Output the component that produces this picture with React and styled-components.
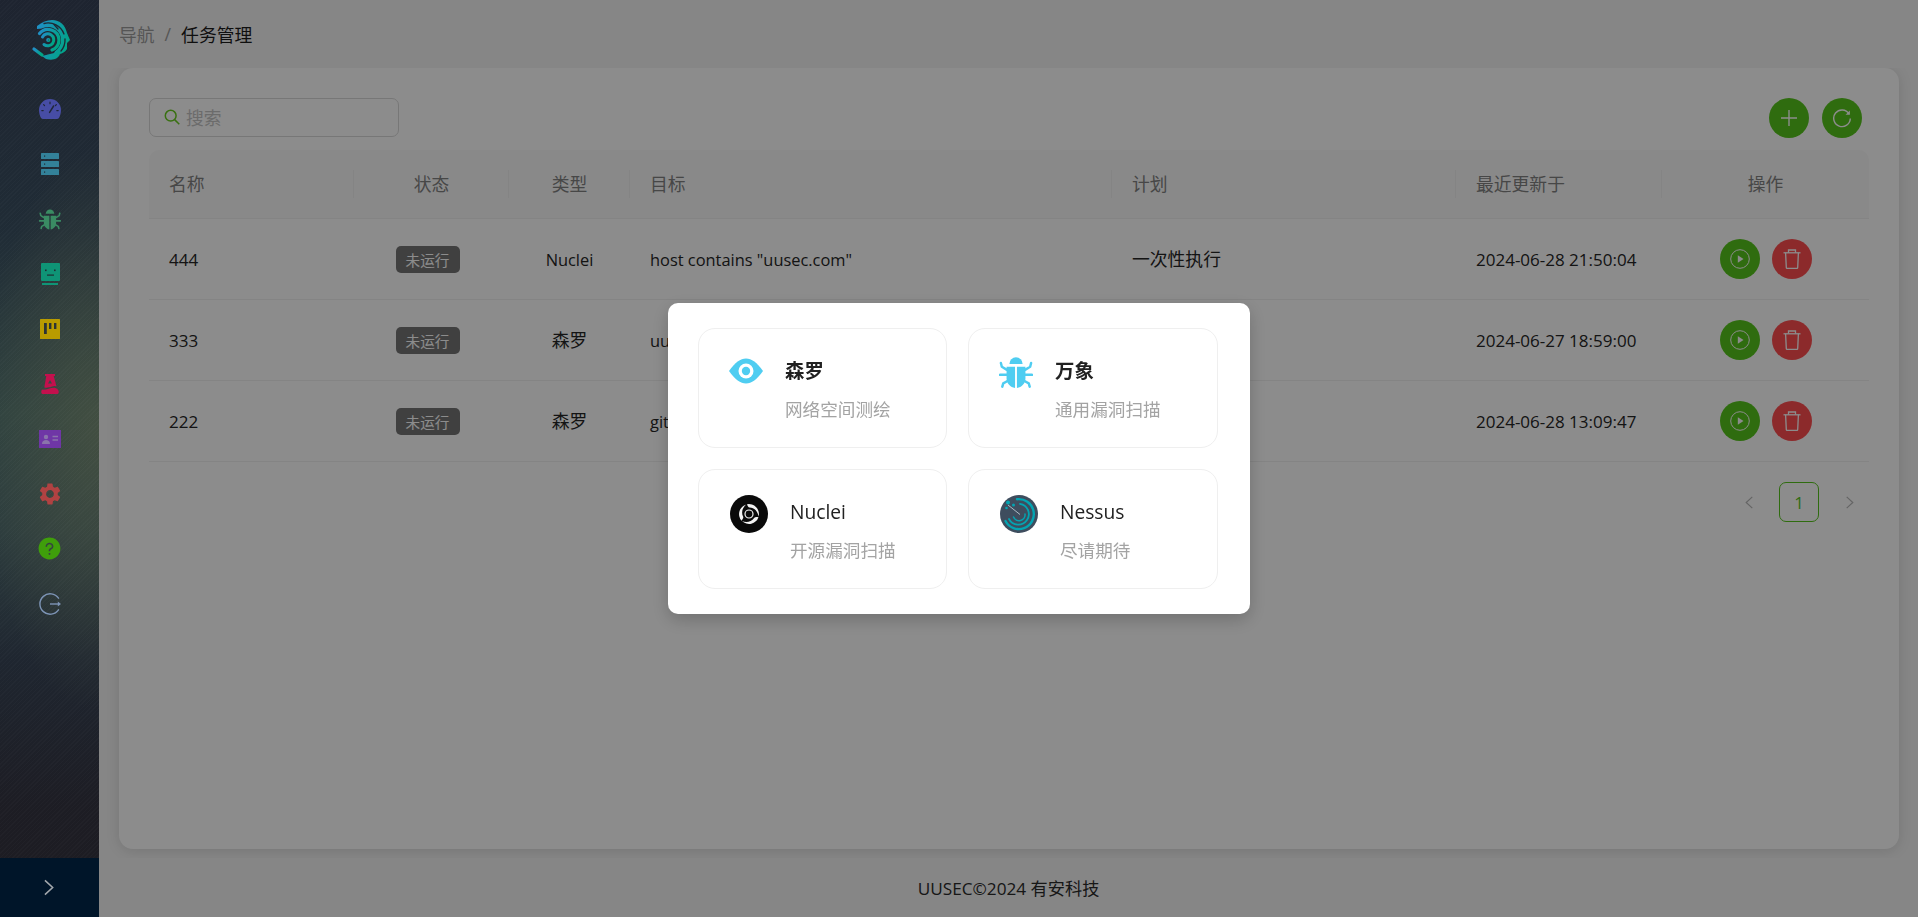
import React from "react";
import styled, { createGlobalStyle } from "styled-components";
import { MdSettings } from "react-icons/md";
import { AiFillQuestionCircle } from "react-icons/ai";

const Global = createGlobalStyle`
  * { box-sizing: border-box; }
  html, body { margin: 0; height: 100%; }
  body {
    font-family: "Open Sans", "Noto Sans CJK SC", sans-serif;
    font-size: 17px;
    color: #222;
    background: #f4f4f4;
    overflow: hidden;
  }
  #root { height: 100%; }
`;

const COLUMNS = "205px 155px 121px 482px 344px 206px 207px";

const Layout = styled.div`
  display: flex;
  height: 917px;
`;

const Sidebar = styled.aside`
  position: relative;
  z-index: 20;
  flex: 0 0 99px;
  display: flex;
  flex-direction: column;
  background:
    repeating-linear-gradient(135deg, rgba(255, 255, 255, 0.018) 0 1px, transparent 1px 3px),
    radial-gradient(ellipse 120px 280px at 100% 47%, rgba(74, 84, 66, 0.7), rgba(74, 84, 66, 0) 100%),
    linear-gradient(180deg, #1e2430 0%, #202c36 25%, #2f4240 45%, #2c3c3e 58%, #1f2630 72%, #1d1d24 88%, #1d1c22 100%);
`;

const LogoBox = styled.div`
  flex: 0 0 81px;
  display: flex;
  justify-content: center;
  padding-top: 20px;
`;

const Menu = styled.nav`
  flex: 1;
  display: flex;
  flex-direction: column;
`;

const MenuItem = styled.div`
  flex: 0 0 55px;
  display: flex;
  align-items: center;
  justify-content: center;
  color: ${(p) => p.$color};
`;

const Trigger = styled.div`
  flex: 0 0 59px;
  display: flex;
  align-items: center;
  justify-content: center;
  padding-right: 2px;
  background: #001529;
  color: #a3a8ad;
`;

const Main = styled.main`
  flex: 1;
  min-width: 0;
  display: flex;
  flex-direction: column;
`;

const Breadcrumb = styled.header`
  flex: 0 0 68px;
  display: flex;
  align-items: center;
  gap: 10px;
  padding-left: 20px;
  padding-bottom: 1px;
`;

const Crumb = styled.span`
  font-size: 17.8px;
  color: ${(p) => (p.$current ? "#1c1c1c" : "#9c9c9c")};
`;

const Content = styled.div`
  flex: 1;
  min-height: 0;
  overflow: hidden;
  padding: 0 19px 9px 20px;
`;

const Card = styled.section`
  height: 100%;
  padding: 30px;
  background: #fff;
  border-radius: 14px;
  box-shadow: 0 2px 14px rgba(0, 0, 0, 0.12);
`;

const Toolbar = styled.div`
  display: flex;
  align-items: flex-start;
  justify-content: space-between;
  height: 40px;
  padding-right: 7px;
  margin-bottom: 12px;
`;

const Search = styled.label`
  display: flex;
  align-items: center;
  gap: 6px;
  width: 250px;
  height: 39px;
  padding: 0 15px 2px 14px;
  border: 1px solid #d9d9d9;
  border-radius: 7px;
  color: #c4c4c4;
  font-size: 17.8px;
`;

const ToolButtons = styled.div`
  display: flex;
  gap: 13px;
`;

const RoundButton = styled.button`
  width: 40px;
  height: 40px;
  padding: 0;
  border: 0;
  border-radius: 50%;
  display: flex;
  align-items: center;
  justify-content: center;
  color: #fff;
  background: ${(p) => (p.$danger ? "#ff4d4f" : "#57c51d")};
`;

const HeaderRow = styled.div`
  display: grid;
  grid-template-columns: ${COLUMNS};
  height: 69px;
  background: #fafafa;
  border-bottom: 1px solid #f0f0f0;
  border-radius: 10px 10px 0 0;
`;

const HeaderCell = styled.div`
  position: relative;
  display: flex;
  align-items: center;
  justify-content: ${(p) => (p.$center ? "center" : "flex-start")};
  padding: 0 20px 2px;
  color: #828282;
  font-size: 17.8px;
  &::after {
    content: ${(p) => (p.$last ? "none" : '""')};
    position: absolute;
    right: 0;
    top: 20px;
    height: 28px;
    width: 1px;
    background: #f0f0f0;
  }
`;

const Row = styled.div`
  display: grid;
  grid-template-columns: ${COLUMNS};
  height: 81px;
  border-bottom: 1px solid #f0f0f0;
`;

const Cell = styled.div`
  display: flex;
  align-items: center;
  justify-content: ${(p) => (p.$center ? "center" : "flex-start")};
  padding: 0 20px;
  white-space: nowrap;
  overflow: hidden;
  color: #262626;
`;

const TextCell = styled(Cell)`
  font-size: 16.4px;
`;

const CjkCell = styled(Cell)`
  font-size: 17.8px;
  padding-bottom: 2px;
`;

const ActionCell = styled.div`
  display: flex;
  align-items: center;
  gap: 12px;
  padding-left: 58px;
`;

const Tag = styled.span`
  display: inline-flex;
  align-items: center;
  justify-content: center;
  width: 64px;
  height: 27px;
  margin-right: 8px;
  border-radius: 5px;
  background: #767676;
  color: #fff;
  font-size: 14.6px;
`;

const Pagination = styled.div`
  display: flex;
  justify-content: flex-end;
  gap: 10px;
  margin-top: 20px;
`;

const PageArrow = styled.div`
  width: 40px;
  height: 40px;
  display: flex;
  align-items: center;
  justify-content: center;
  color: #b8b8b8;
`;

const PageCurrent = styled.div`
  width: 40px;
  height: 40px;
  display: flex;
  align-items: center;
  justify-content: center;
  border: 1px solid #57c51d;
  border-radius: 7px;
  color: #57c51d;
`;

const Footer = styled.footer`
  flex: 0 0 59px;
  display: flex;
  align-items: center;
  justify-content: center;
  padding-bottom: 1px;
  color: #2a2a2a;
  font-size: 17.2px;
`;

const Overlay = styled.div`
  position: fixed;
  inset: 0;
  z-index: 10;
  display: flex;
  align-items: center;
  justify-content: center;
  background: rgba(0, 0, 0, 0.45);
`;

const Modal = styled.div`
  width: 582px;
  height: 311px;
  padding: 25px 32px 25px 30px;
  display: grid;
  grid-template-columns: 249px 250px;
  grid-auto-rows: 120px;
  column-gap: 21px;
  row-gap: 21px;
  background: #fff;
  border-radius: 10px;
  box-shadow: 0 6px 18px rgba(0, 0, 0, 0.2);
`;

const Product = styled.div`
  display: flex;
  align-items: flex-start;
  gap: 22px;
  padding: 25px 10px 0 30px;
  border: 1px solid #efefef;
  border-radius: 17px;
`;

const ProductIcon = styled.svg`
  flex: none;
  width: ${(p) => p.$w}px;
  height: ${(p) => p.$h}px;
  margin-left: ${(p) => p.$inset || 0}px;
`;

const ProductText = styled.div`
  padding-top: 3px;
  display: flex;
  flex-direction: column;
  gap: 10px;
`;

const ProductName = styled.div`
  line-height: 28px;
  font-size: ${(p) => (p.$bold ? "19.4px" : "19.2px")};
  font-weight: ${(p) => (p.$bold ? 700 : 500)};
  color: #212121;
`;

const ProductDesc = styled.div`
  line-height: 28px;
  font-size: 17.6px;
  color: #a3a3a3;
  white-space: nowrap;
`;

const Logo = () => (
  <svg width="40" height="40" viewBox="0 0 40 40" fill="none">
    <defs>
      <linearGradient id="lg" x1="0" y1="0.2" x2="1" y2="0.6">
        <stop offset="0" stopColor="#1f8fc4" />
        <stop offset="1" stopColor="#00a585" />
      </linearGradient>
    </defs>
    <path
      d="M7 6C12 2 17 0 22 0C30 0 35 5 37 13L40 20L37 23L37 29C35 32 33 33 30 34L29 36L27 38C24 40 20 40 16 39L12 36L24 33L30 22L28 12L18 8L7 9z"
      fill="url(#lg)"
    />
    <circle cx="18" cy="20" r="13" fill="#1f2833" />
    <g stroke="url(#lg)" strokeLinecap="round">
      <path d="M9.500 13.500A11 11 0 0 1 29 20A11 11 0 0 1 22 30" strokeWidth="3.200" />
      <path d="M12.500 17A6 6 0 1 1 14 24.500" strokeWidth="3" />
      <path d="M1 26L1.100 26" strokeWidth="3.200" />
      <path d="M5 16.500L5.100 16.500" strokeWidth="3.200" />
      <path d="M4 29L12 35" strokeWidth="3.200" />
      <circle cx="18.300" cy="20" r="1.300" strokeWidth="1.600" />
    </g>
    <g stroke="#1f2833" strokeWidth="1.300" strokeLinecap="round" fill="none">
      <path d="M14 3.500A17 17 0 0 1 34 14" />
      <path d="M35 19A17 17 0 0 1 31 31" />
      <path d="M24 4.500L28 9" />
    </g>
  </svg>
);

const Gauge = () => (
  <svg width="22" height="20" viewBox="0 0 22 20">
    <path d="M11 0A11 11 0 0 0 0 11c0 3 .7 5.400 1.800 7.600.3.800 1 1.400 2 1.400h14.400c1 0 1.700-.6 2-1.400C21.300 16.400 22 14 22 11A11 11 0 0 0 11 0z" fill="#474da5" />
    <g stroke="#20283a" strokeWidth="1.200" strokeLinecap="round">
      <path d="M11 3.200v1.500M4.600 5.600l.9.9M17.400 5.600l-.9.9M2.800 11.600h1.400M17.800 11.600h1.400" />
      <path d="M10.600 13.400L14.600 7" strokeWidth="1.500" />
    </g>
  </svg>
);

const ServerIcon = () => (
  <svg width="18" height="22" viewBox="0 0 18 22" fill="#338199">
    <rect y="0" width="18" height="6" rx="0.6" />
    <rect y="8" width="18" height="6" rx="0.6" />
    <rect y="16" width="18" height="6" rx="0.6" />
    <g fill="#1f2a33">
      <rect x="3" y="2.500" width="1.200" height="1.200" />
      <rect x="3" y="10.500" width="1.200" height="1.200" />
      <rect x="3" y="18.500" width="1.200" height="1.200" />
    </g>
  </svg>
);

const bugShape = (
  <>
    <path d="M11 9.500a7 7 0 0 1 14 0z" fill="currentColor" />
    <path d="M8 12.500h9V35c-5-.5-9-5-9-10z" fill="currentColor" />
    <path d="M28 12.500h-9V35c5-.5 9-5 9-10z" fill="currentColor" />
    <g stroke="currentColor" strokeWidth="2.600" fill="none" strokeLinecap="round" strokeLinejoin="round">
      <path d="M8 15.500L3 12.500L2 8.500M28 15.500L33 12.500L34 8.500" />
      <path d="M8 21H1M28 21h7" />
      <path d="M9 27.500L4.500 30L3.500 33.500M27 27.500L31.500 30L32.500 33.500" />
    </g>
  </>
);

const SideBug = styled.svg`
  width: 22px;
  height: 22px;
  color: #3a8b63;
`;

const Face = () => (
  <svg width="20" height="22" viewBox="0 0 20 22">
    <rect x="1" width="19" height="18" rx="1" fill="#0f9476" />
    <rect x="2" y="20" width="16" height="2" fill="#0f9476" />
    <g fill="#1f2f33">
      <rect x="5" y="6.500" width="1.600" height="1.600" />
      <rect x="14" y="6.500" width="1.600" height="1.600" />
      <rect x="7" y="11.500" width="7" height="1.200" />
    </g>
  </svg>
);

const Kanban = () => (
  <svg width="20" height="20" viewBox="0 0 20 20">
    <rect width="20" height="20" rx="0.6" fill="#b99b00" />
    <rect x="4" y="4" width="2.800" height="11" fill="#2c3434" />
    <rect x="9" y="4" width="2.400" height="6" fill="#2c3434" />
    <rect x="14" y="4" width="2.400" height="6" fill="#2c3434" />
  </svg>
);

const Flask = () => (
  <svg width="18" height="20" viewBox="0 0 18 20">
    <path d="M4 0h10v2h-1.300L15.500 12.500C12.500 11 9.500 14.500 3.300 13.500L5.300 2H4z" fill="#c3104d" />
    <path d="M1 15.500C6 16.500 9 13.500 13 13.800C15 14 16.500 15 17.200 16C18 17 18 20 16.500 20H1.500C0 20 0 16.500 1 15.500z" fill="#c3104d" />
    <path d="M9 6L11 9.500H7z" fill="#3a4a46" />
  </svg>
);

const IdCard = () => (
  <svg width="22" height="18" viewBox="0 0 22 18">
    <rect width="22" height="18" fill="#6f36a6" />
    <circle cx="7" cy="7" r="2.200" fill="#8a74ab" />
    <path d="M3 14c0-3 1.800-4 4-4s4 1 4 4z" fill="#8a74ab" />
    <path d="M13.500 6.500h5.500M13.500 10h5.500" stroke="#8a74ab" strokeWidth="1.600" />
  </svg>
);

const Logout = () => (
  <svg width="22" height="22" viewBox="0 0 22 22" fill="none">
    <path d="M19.500 5.200A10.200 10.200 0 1 0 19.500 16.800" stroke="#7d94b6" strokeWidth="1.400" strokeLinecap="round" />
    <path d="M11 11h9" stroke="#7d94b6" strokeWidth="1.400" />
    <path d="M18.800 8.500L22 11L18.800 13.500z" fill="#7d94b6" />
  </svg>
);

const Chevron = ({ dir = "right", size = 15 }) => (
  <svg width={size} height={size} viewBox="0 0 16 16" fill="none">
    <path d={dir === "right" ? "M5 2l6.500 6L5 14" : "M11 2L4.500 8l6.500 6"} stroke="currentColor" strokeWidth="1.300" />
  </svg>
);

const SearchIcon = () => (
  <svg width="16" height="16" viewBox="0 0 16 16" fill="none" stroke="#69cc20" strokeWidth="1.500">
    <circle cx="6.700" cy="6.700" r="5.400" />
    <path d="M10.600 10.600L15.300 15.300" />
  </svg>
);

const PlusIcon = () => (
  <svg width="18" height="18" viewBox="0 0 18 18" fill="none" stroke="#fff" strokeWidth="1.400">
    <path d="M9 1v16M1 9h16" />
  </svg>
);

const RefreshIcon = () => (
  <svg width="20" height="20" viewBox="0 0 20 20" fill="none" stroke="#fff" strokeWidth="1.400">
    <path d="M17 5.800A8.300 8.300 0 1 0 18.300 10.500" />
    <path d="M17.900 2.500v4.300h-4.300z" fill="#fff" stroke="none" />
  </svg>
);

const PlayIcon = () => (
  <svg width="20" height="20" viewBox="0 0 20 20" fill="none">
    <circle cx="10" cy="10" r="9.300" stroke="#fff" strokeWidth="1" />
    <path d="M7.800 6.200L13.500 10L7.800 13.800z" fill="#fff" />
  </svg>
);

const TrashIcon = () => (
  <svg width="18" height="20" viewBox="0 0 18 20" fill="none" stroke="#fff" strokeWidth="1.300">
    <path d="M0.500 3.800h17" />
    <path d="M5.500 3.800V1h7v2.800" />
    <path d="M2.600 3.800l.7 14.800c0 .5.400.8.800.8h9.800c.5 0 .8-.3.8-.8l.7-14.800" />
  </svg>
);

const EyeLogo = () => (
  <ProductIcon $w={34} $h={34} viewBox="0 0 34 34">
    <path d="M0 17C6 8.500 11.500 4.500 17 4.500S28 8.500 34 17c-6 8.500-11.500 12.500-17 12.500S6 25.500 0 17z" fill="#4fcdf1" />
    <circle cx="17" cy="17" r="7.500" fill="#fff" />
    <circle cx="17" cy="17" r="4.200" fill="#4fcdf1" />
  </ProductIcon>
);

const BugLogo = () => (
  <ProductIcon $w={34} $h={36} viewBox="0 0 36 36" style={{ color: "#4fcdf1" }}>
    {bugShape}
  </ProductIcon>
);

const blade = "M17 9.200A10 10 0 0 1 28.600 21.500C28 17.500 25.500 13 19.500 12.600C18.500 12.500 17.500 11 17 9.200z";

const NucleiLogo = () => (
  <ProductIcon $w={38} $h={38} $inset={1} viewBox="0 0 38 38">
    <circle cx="19" cy="19" r="19" fill="#0a0a0a" />
    <g fill="#f4f4f4">
      <path d={blade} />
      <path d={blade} transform="rotate(120 19 19)" />
      <path d={blade} transform="rotate(240 19 19)" />
    </g>
    <circle cx="19" cy="19" r="4" fill="none" stroke="#f4f4f4" strokeWidth="1.200" />
  </ProductIcon>
);

const NessusLogo = () => (
  <ProductIcon $w={38} $h={38} $inset={1} viewBox="0 0 38 38">
    <circle cx="19" cy="19" r="19" fill="#3e4d5e" />
    <g fill="none" stroke="#03a4b2" strokeLinecap="round">
      <path d="M17 4.200A15 15 0 1 1 5.500 26" strokeWidth="2.400" />
      <path d="M20 8.800A10.500 10.500 0 1 1 9 24" strokeWidth="1.800" />
      <path d="M25 19A6 6 0 0 1 13.500 22" strokeWidth="1.500" />
    </g>
    <path d="M8 10L20 19.500" stroke="#b9c6cf" strokeWidth="0.900" />
    <g fill="#03a4b2">
      <circle cx="8" cy="7.500" r="2" />
      <circle cx="13.500" cy="10" r="1.500" />
      <circle cx="6.500" cy="13" r="1.300" />
    </g>
  </ProductIcon>
);

const rows = [
  { name: "444", type: "Nuclei", target: 'host contains "uusec.com"', time: "2024-06-28 21:50:04" },
  { name: "333", type: "森罗", target: "uusec.com", time: "2024-06-27 18:59:00" },
  { name: "222", type: "森罗", target: "github.com", time: "2024-06-28 13:09:47" },
];

const headers = [
  ["名称", false],
  ["状态", true],
  ["类型", true],
  ["目标", false],
  ["计划", false],
  ["最近更新于", false],
  ["操作", true],
];

const products = [
  { name: "森罗", desc: "网络空间测绘", bold: true, Icon: EyeLogo },
  { name: "万象", desc: "通用漏洞扫描", bold: true, Icon: BugLogo },
  { name: "Nuclei", desc: "开源漏洞扫描", Icon: NucleiLogo },
  { name: "Nessus", desc: "尽请期待", Icon: NessusLogo },
];

export default function App() {
  return (
    <>
      <Global />
      <Layout>
        <Sidebar>
          <LogoBox>
            <Logo />
          </LogoBox>
          <Menu>
            <MenuItem><Gauge /></MenuItem>
            <MenuItem><ServerIcon /></MenuItem>
            <MenuItem><SideBug viewBox="0 0 36 36">{bugShape}</SideBug></MenuItem>
            <MenuItem><Face /></MenuItem>
            <MenuItem><Kanban /></MenuItem>
            <MenuItem><Flask /></MenuItem>
            <MenuItem><IdCard /></MenuItem>
            <MenuItem $color="#b04242"><MdSettings size={26} /></MenuItem>
            <MenuItem $color="#3f9e0b"><AiFillQuestionCircle size={25} /></MenuItem>
            <MenuItem><Logout /></MenuItem>
          </Menu>
          <Trigger>
            <Chevron dir="right" size={19} />
          </Trigger>
        </Sidebar>
        <Main>
          <Breadcrumb>
            <Crumb>导航</Crumb>
            <Crumb>/</Crumb>
            <Crumb $current>任务管理</Crumb>
          </Breadcrumb>
          <Content>
            <Card>
              <Toolbar>
                <Search>
                  <SearchIcon />
                  搜索
                </Search>
                <ToolButtons>
                  <RoundButton><PlusIcon /></RoundButton>
                  <RoundButton><RefreshIcon /></RoundButton>
                </ToolButtons>
              </Toolbar>
              <HeaderRow>
                {headers.map(([label, center], i) => (
                  <HeaderCell key={label} $center={center} $last={i === headers.length - 1}>
                    {label}
                  </HeaderCell>
                ))}
              </HeaderRow>
              {rows.map((r) => (
                <Row key={r.name}>
                  <Cell>{r.name}</Cell>
                  <Cell $center><Tag>未运行</Tag></Cell>
                  {r.type === "Nuclei" ? (
                    <TextCell $center>{r.type}</TextCell>
                  ) : (
                    <CjkCell $center>{r.type}</CjkCell>
                  )}
                  <TextCell>{r.target}</TextCell>
                  <CjkCell>一次性执行</CjkCell>
                  <Cell>{r.time}</Cell>
                  <ActionCell>
                    <RoundButton><PlayIcon /></RoundButton>
                    <RoundButton $danger><TrashIcon /></RoundButton>
                  </ActionCell>
                </Row>
              ))}
              <Pagination>
                <PageArrow><Chevron dir="left" /></PageArrow>
                <PageCurrent>1</PageCurrent>
                <PageArrow><Chevron dir="right" /></PageArrow>
              </Pagination>
            </Card>
          </Content>
          <Footer>UUSEC©2024 有安科技</Footer>
        </Main>
      </Layout>
      <Overlay>
        <Modal>
          {products.map(({ name, desc, bold, Icon }) => (
            <Product key={name}>
              <Icon />
              <ProductText>
                <ProductName $bold={bold}>{name}</ProductName>
                <ProductDesc>{desc}</ProductDesc>
              </ProductText>
            </Product>
          ))}
        </Modal>
      </Overlay>
    </>
  );
}
